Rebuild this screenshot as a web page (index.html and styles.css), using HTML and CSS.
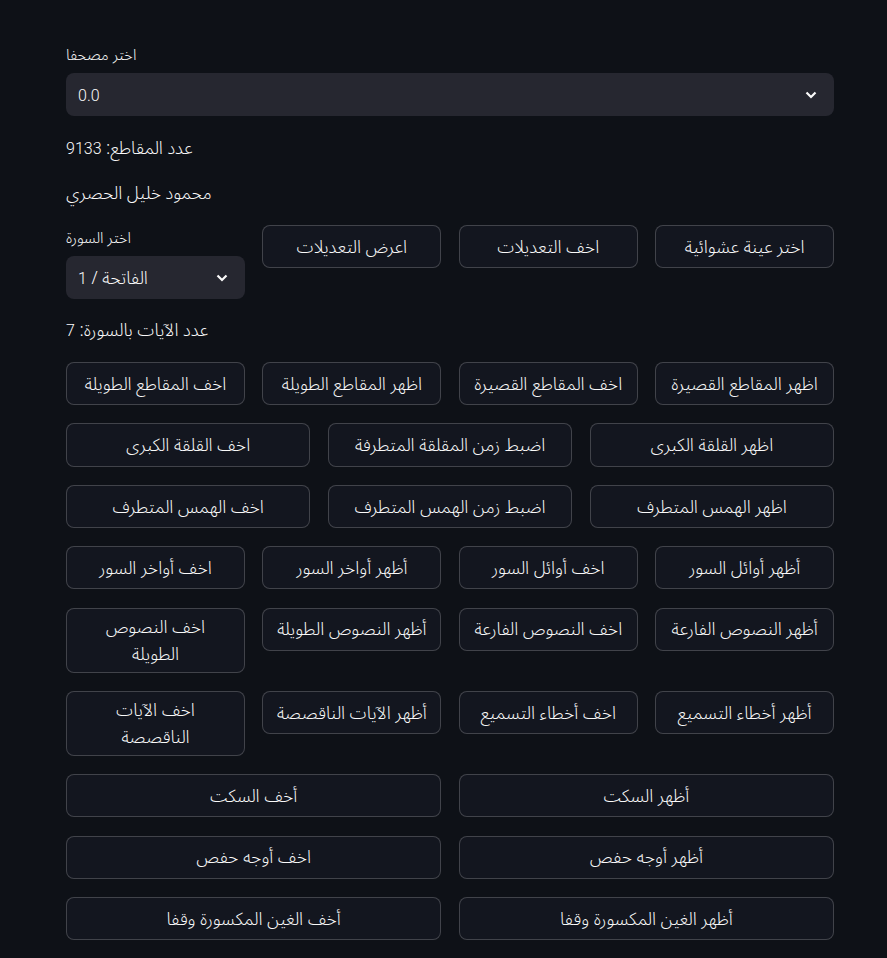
FILE: index.html
```html
<!DOCTYPE html>
<html lang="ar">
<head>
<meta charset="utf-8">
<link rel="stylesheet" href="styles.css">
</head>
<body>
<main class="main">
  <label class="label">اختر مصحفا</label>
  <div class="select select-top">
    <span class="select-value"><span class="num">0.0</span></span>
    <svg class="chev" width="12" height="8" viewBox="0 0 12 8"><path d="M1.5 1.5 L6 6 L10.5 1.5" fill="none" stroke="#fafafa" stroke-width="2.2"/></svg>
  </div>
  <p class="text t1">عدد المقاطع: <span class="num">9133</span></p>
  <p class="text t2">محمود خليل الحصري</p>

  <div class="row cols4 row-first">
    <div class="selcol">
      <label class="label label-small">اختر السورة</label>
      <div class="select">
        <span class="select-value">الفاتحة / <span class="num">1</span></span>
        <svg class="chev" width="12" height="8" viewBox="0 0 12 8"><path d="M1.5 1.5 L6 6 L10.5 1.5" fill="none" stroke="#fafafa" stroke-width="2.2"/></svg>
      </div>
    </div>
    <button class="btn">اعرض التعديلات</button>
    <button class="btn">اخف التعديلات</button>
    <button class="btn">اختر عينة عشوائية</button>
  </div>

  <p class="text t3">عدد الآيات بالسورة: <span class="num">7</span></p>

  <div class="stack">
    <div class="row cols4">
      <button class="btn">اخف المقاطع الطويلة</button>
      <button class="btn">اظهر المقاطع الطويلة</button>
      <button class="btn">اخف المقاطع القصيرة</button>
      <button class="btn">اظهر المقاطع القصيرة</button>
    </div>
    <div class="row cols3">
      <button class="btn">اخف القلقة الكبرى</button>
      <button class="btn">اضبط زمن المقلقة المتطرفة</button>
      <button class="btn">اظهر القلقة الكبرى</button>
    </div>
    <div class="row cols3">
      <button class="btn">اخف الهمس المتطرف</button>
      <button class="btn">اضبط زمن الهمس المتطرف</button>
      <button class="btn">اظهر الهمس المتطرف</button>
    </div>
    <div class="row cols4">
      <button class="btn">اخف أواخر السور</button>
      <button class="btn">أظهر أواخر السور</button>
      <button class="btn">اخف أوائل السور</button>
      <button class="btn">أظهر أوائل السور</button>
    </div>
    <div class="row cols4">
      <button class="btn">اخف النصوص<br>الطويلة</button>
      <button class="btn">أظهر النصوص الطويلة</button>
      <button class="btn">اخف النصوص الفارعة</button>
      <button class="btn">أظهر النصوص الفارعة</button>
    </div>
    <div class="row cols4">
      <button class="btn">اخف الآيات<br>الناقصصة</button>
      <button class="btn">أظهر الآيات الناقصصة</button>
      <button class="btn">اخف أخطاء التسميع</button>
      <button class="btn">أظهر أخطاء التسميع</button>
    </div>
    <div class="row cols2">
      <button class="btn">أخف السكت</button>
      <button class="btn">أظهر السكت</button>
    </div>
    <div class="row cols2">
      <button class="btn">اخف أوجه حفص</button>
      <button class="btn">أظهر أوجه حفص</button>
    </div>
    <div class="row cols2">
      <button class="btn">أخف الغين المكسورة وقفا</button>
      <button class="btn">أظهر الغين المكسورة وقفا</button>
    </div>
  </div>
</main>
</body>
</html>
```

FILE: styles.css
```css
html, body {
  margin: 0;
  padding: 0;
  background: #0e1117;
  color: #fafafa;
  font-family: "Noto Sans Arabic", "Noto Sans", sans-serif;
  font-size: 17.5px;
  font-weight: 300;
}

.main {
  width: 768px;
  margin-left: 66px;
  padding-top: 45px;
  display: flex;
  flex-direction: column;
}

.num {
  font-family: Roboto, "Noto Sans", sans-serif;
  font-size: 16px;
  font-weight: 300;
}

.label {
  display: block;
  font-size: 15px;
  line-height: 21px;
  padding-bottom: 7px;
}

.label-small {
  margin-top: 3px;
}

.select {
  height: 43px;
  box-sizing: border-box;
  background: #262730;
  border-radius: 8px;
  display: flex;
  align-items: center;
  justify-content: space-between;
  padding: 0 17px 0 12px;
}

.select-value {
  line-height: 24px;
  padding-top: 2px;
}

.chev {
  display: block;
}

.text {
  margin: 0;
  line-height: 24px;
  padding-top: 1px;
}

.t1 { margin-top: 20px; }
.t2 { margin-top: 20px; }
.t3 { margin-top: 19px; }

.row {
  display: grid;
  gap: 17.6px;
  align-items: start;
}

.row-first { margin-top: 19px; }

.cols4 { grid-template-columns: repeat(4, 1fr); }
.cols3 { grid-template-columns: repeat(3, 1fr); }
.cols2 { grid-template-columns: repeat(2, 1fr); }

.stack {
  margin-top: 19px;
  display: flex;
  flex-direction: column;
  gap: 18.2px;
}

.btn {
  min-height: 43.2px;
  box-sizing: border-box;
  background: #13161f;
  color: #fafafa;
  border: 1px solid rgba(250, 250, 250, 0.2);
  border-radius: 8px;
  padding: 5px 8px 3px;
  font-family: inherit;
  font-size: 17.5px;
  font-weight: 300;
  line-height: 27.6px;
  text-align: center;
  width: 100%;
}
```
